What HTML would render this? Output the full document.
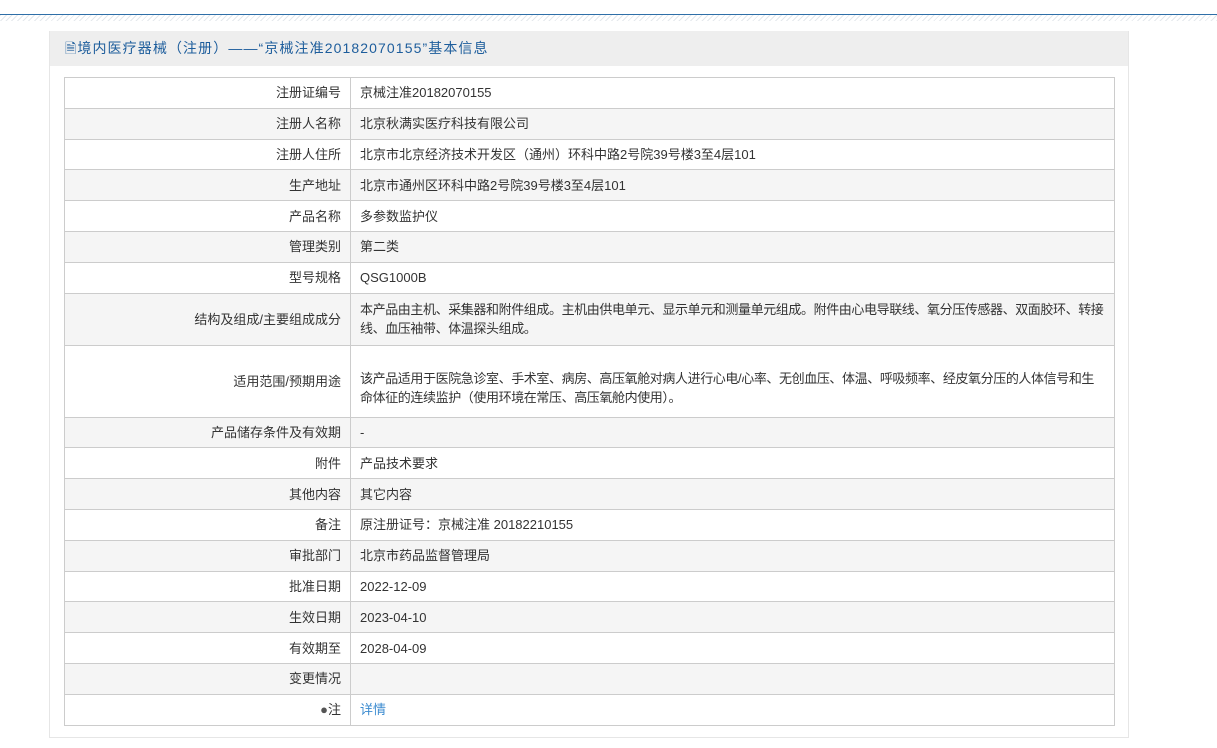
<!DOCTYPE html><html><head><meta charset="utf-8"><style>
body{margin:0;background:#fff;font-family:"Liberation Sans","Noto Sans CJK SC",sans-serif;font-size:13px;color:#333;width:1217px;height:748px;overflow:hidden;position:relative}
.topline{position:absolute;left:0;top:14px;width:1217px;height:1px;background:#2f6fa8}
.hatch{position:absolute;left:0;top:15px;width:1217px;height:6px;background:repeating-linear-gradient(135deg,#e4e8ec 0 1px,#fff 1px 4px)}
.panel{position:absolute;left:49px;top:31px;width:1078px;height:706px;border:1px solid #e6e6e6;border-top:none}
.hd{height:35px;background:#eee;color:#1d5d9c;font-size:14px;line-height:35px;padding-left:15px;letter-spacing:1.1px}
table{position:absolute;left:14px;top:46px;width:1051px;border-collapse:collapse}
td{border:1px solid #ccc;padding:0 9px;line-height:19px;height:30.8px;box-sizing:border-box}
td.l{width:286px;text-align:right}
tr:nth-child(even) td{background:#f5f5f5}
a{color:#3b8bd0;text-decoration:none}
.t{white-space:nowrap;letter-spacing:-0.4px}
</style></head><body>
<div class="topline"></div><div class="hatch"></div>
<div class="panel"><div class="hd">🗎境内医疗器械（注册）——“京械注准20182070155”基本信息</div>
<table>
<tr><td class="l">注册证编号</td><td>京械注准20182070155</td></tr>
<tr><td class="l">注册人名称</td><td>北京秋满实医疗科技有限公司</td></tr>
<tr><td class="l">注册人住所</td><td>北京市北京经济技术开发区（通州）环科中路2号院39号楼3至4层101</td></tr>
<tr><td class="l">生产地址</td><td>北京市通州区环科中路2号院39号楼3至4层101</td></tr>
<tr><td class="l">产品名称</td><td>多参数监护仪</td></tr>
<tr><td class="l">管理类别</td><td>第二类</td></tr>
<tr><td class="l">型号规格</td><td>QSG1000B</td></tr>
<tr><td class="l" style="height:52px">结构及组成/主要组成成分</td><td class="t" style="vertical-align:top;padding-top:6px">本产品由主机、采集器和附件组成。主机由供电单元、显示单元和测量单元组成。附件由心电导联线、氧分压传感器、双面胶环、转接<br>线、血压袖带、体温探头组成。</td></tr>
<tr><td class="l" style="height:72px">适用范围/预期用途</td><td class="t" style="padding-top:14px">该产品适用于医院急诊室、手术室、病房、高压氧舱对病人进行心电/心率、无创血压、体温、呼吸频率、经皮氧分压的人体信号和生<br>命体征的连续监护（使用环境在常压、高压氧舱内使用）。</td></tr>
<tr><td class="l">产品储存条件及有效期</td><td>-</td></tr>
<tr><td class="l">附件</td><td>产品技术要求</td></tr>
<tr><td class="l">其他内容</td><td>其它内容</td></tr>
<tr><td class="l">备注</td><td>原注册证号：京械注准 20182210155</td></tr>
<tr><td class="l">审批部门</td><td>北京市药品监督管理局</td></tr>
<tr><td class="l">批准日期</td><td>2022-12-09</td></tr>
<tr><td class="l">生效日期</td><td>2023-04-10</td></tr>
<tr><td class="l">有效期至</td><td>2028-04-09</td></tr>
<tr><td class="l">变更情况</td><td></td></tr>
<tr><td class="l" style="height:30px"><span style="color:#555">●</span>注</td><td><a>详情</a></td></tr>
</table></div>
</body></html>
